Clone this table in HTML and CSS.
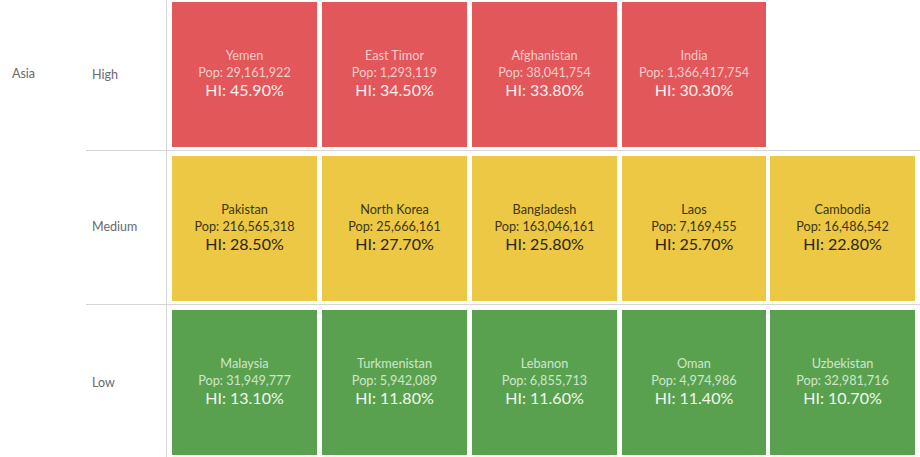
FILE: index.html
```html
<!DOCTYPE html>
<html>
<head>
<meta charset="utf-8">
<link rel="stylesheet" href="styles.css">
</head>
<body>
<div class="table">
  <div class="region"><div class="region-label">Asia</div></div>
  <div class="rows">
    <div class="row first">
      <div class="level">High</div>
      <div class="tiles">
        <div class="tile red"><div class="name">Yemen</div><div class="pop">Pop: 29,161,922</div><div class="hi">HI: 45.90%</div></div>
        <div class="tile red"><div class="name">East Timor</div><div class="pop">Pop: 1,293,119</div><div class="hi">HI: 34.50%</div></div>
        <div class="tile red"><div class="name">Afghanistan</div><div class="pop">Pop: 38,041,754</div><div class="hi">HI: 33.80%</div></div>
        <div class="tile red narrow"><div class="name">India</div><div class="pop">Pop: 1,366,417,754</div><div class="hi">HI: 30.30%</div></div>
      </div>
    </div>
    <div class="row">
      <div class="level">Medium</div>
      <div class="tiles">
        <div class="tile yellow"><div class="name">Pakistan</div><div class="pop">Pop: 216,565,318</div><div class="hi">HI: 28.50%</div></div>
        <div class="tile yellow"><div class="name">North Korea</div><div class="pop">Pop: 25,666,161</div><div class="hi">HI: 27.70%</div></div>
        <div class="tile yellow"><div class="name">Bangladesh</div><div class="pop">Pop: 163,046,161</div><div class="hi">HI: 25.80%</div></div>
        <div class="tile yellow narrow"><div class="name">Laos</div><div class="pop">Pop: 7,169,455</div><div class="hi">HI: 25.70%</div></div>
        <div class="tile yellow"><div class="name">Cambodia</div><div class="pop">Pop: 16,486,542</div><div class="hi">HI: 22.80%</div></div>
      </div>
    </div>
    <div class="row last">
      <div class="level">Low</div>
      <div class="tiles">
        <div class="tile green"><div class="name">Malaysia</div><div class="pop">Pop: 31,949,777</div><div class="hi">HI: 13.10%</div></div>
        <div class="tile green"><div class="name">Turkmenistan</div><div class="pop">Pop: 5,942,089</div><div class="hi">HI: 11.80%</div></div>
        <div class="tile green"><div class="name">Lebanon</div><div class="pop">Pop: 6,855,713</div><div class="hi">HI: 11.60%</div></div>
        <div class="tile green narrow"><div class="name">Oman</div><div class="pop">Pop: 4,974,986</div><div class="hi">HI: 11.40%</div></div>
        <div class="tile green"><div class="name">Uzbekistan</div><div class="pop">Pop: 32,981,716</div><div class="hi">HI: 10.70%</div></div>
      </div>
    </div>
  </div>
</div>
</body>
</html>
```

FILE: styles.css
```css
html, body {
  margin: 0;
  padding: 0;
  background: #ffffff;
  overflow: hidden;
}
body {
  width: 920px;
  height: 457px;
  font-family: Lato, "Open Sans", sans-serif;
}
.table {
  display: flex;
  height: 457px;
}
.region {
  width: 86px;
  flex: none;
}
.region-label {
  height: 147px;
  display: flex;
  align-items: center;
  padding-left: 12px;
  font-size: 12.5px;
  color: #6a6a6a;
}
.rows {
  flex: 1;
  display: flex;
  flex-direction: column;
}
.row {
  display: flex;
  border-bottom: 1px solid #d6d6d6;
  flex: none;
}
.row.last {
  border-bottom: none;
}
.level {
  width: 74px;
  flex: none;
  padding-left: 6px;
  border-right: 1px solid #d6d6d6;
  display: flex;
  align-items: center;
  font-size: 12.5px;
  color: #6a6a6a;
  padding-bottom: 2px;
}
.tiles {
  display: flex;
  gap: 5px;
  padding: 5px 0 3px 5px;
}
.row.first .tiles {
  padding-top: 2px;
}
.row.last .tiles {
  padding-bottom: 6px;
}
.tile {
  width: 145px;
  height: 145px;
  flex: none;
  display: flex;
  flex-direction: column;
  align-items: center;
  justify-content: center;
  text-align: center;
  padding-bottom: 3px;
  box-sizing: border-box;
}
.tile.narrow {
  width: 144px;
  margin-right: -1px;
}
.name {
  font-size: 12.7px;
  line-height: 17px;
}
.pop {
  font-size: 12.7px;
  line-height: 17px;
}
.hi {
  font-size: 16px;
  line-height: 18px;
}
.red {
  background: #e1575a;
}
.red .name, .red .pop {
  color: #f8cccb;
}
.red .hi {
  color: #fdf0ef;
}
.yellow {
  background: #ecc845;
}
.yellow .name, .yellow .pop {
  color: #3e3516;
}
.yellow .hi {
  color: #2a2410;
}
.green {
  background: #59a14f;
}
.green .name, .green .pop {
  color: #cfe6cb;
}
.green .hi {
  color: #f0f8ee;
}
```
